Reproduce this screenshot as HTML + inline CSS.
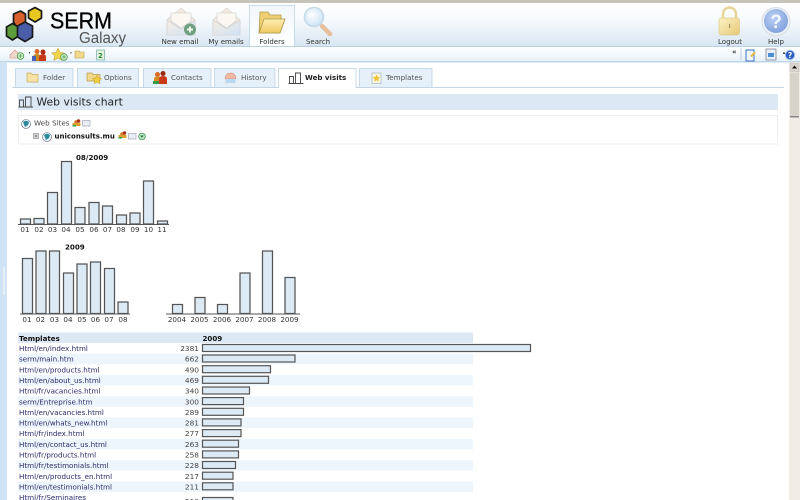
<!DOCTYPE html>
<html><head><meta charset="utf-8"><title>Web visits chart</title>
<style>
html,body{margin:0;padding:0;width:800px;height:500px;overflow:hidden;background:#fff}
svg{display:block;filter:blur(.3px)}
text{font-family:"DejaVu Sans",sans-serif;font-size:7.1px;fill:#333}
.nav{text-anchor:middle;font-size:7px;fill:#333}
.tab{font-size:7.2px;fill:#555}
.l{fill:#2a2a6a;font-size:7.15px}
.n{text-anchor:end;font-size:7.4px;fill:#444}
.c{text-anchor:middle;font-size:7.2px;fill:#333}
.b{font-weight:bold;fill:#111;font-size:7.1px}
.bar{fill:#dceaf6;stroke:#555;stroke-width:1.25}
.hb{fill:#dceaf6;stroke:#555;stroke-width:1.2}
.st{fill:#eef6fd}
</style></head>
<body>
<svg width="800" height="500" viewBox="0 0 800 500" xmlns="http://www.w3.org/2000/svg">
<defs>
<linearGradient id="hd" x1="0" y1="0" x2="0" y2="1"><stop offset="0" stop-color="#fff"/><stop offset=".35" stop-color="#f8fbfd"/><stop offset="1" stop-color="#d9e6f2"/></linearGradient>
<linearGradient id="tb" x1="0" y1="0" x2="0" y2="1"><stop offset="0" stop-color="#fff"/><stop offset="1" stop-color="#e8f1f9"/></linearGradient>
<linearGradient id="act" x1="0" y1="0" x2="0" y2="1"><stop offset="0" stop-color="#f3f8fc"/><stop offset="1" stop-color="#fff"/></linearGradient>
<linearGradient id="env" x1="0" y1="0" x2="1" y2="1"><stop offset="0" stop-color="#f7eee2"/><stop offset="1" stop-color="#cfe2f5"/></linearGradient>
<linearGradient id="fol" x1="0" y1="0" x2="0" y2="1"><stop offset="0" stop-color="#fdf0b5"/><stop offset="1" stop-color="#f0c860"/></linearGradient>
<linearGradient id="lock" x1="0" y1="0" x2="1" y2="1"><stop offset="0" stop-color="#fdf3c4"/><stop offset="1" stop-color="#e6c878"/></linearGradient>
<radialGradient id="hlp" cx=".4" cy=".35" r=".7"><stop offset="0" stop-color="#bcd0f2"/><stop offset="1" stop-color="#7f9fdc"/></radialGradient>
<radialGradient id="lens" cx=".4" cy=".4" r=".7"><stop offset="0" stop-color="#fff"/><stop offset="1" stop-color="#c5e0f2"/></radialGradient>
</defs>

<!-- top strip & header -->
<rect width="800" height="3" fill="#c6c3bb"/>
<rect y="3" width="800" height="43" fill="url(#hd)"/>
<rect y="46" width="800" height="1" fill="#b9d0e4"/>
<rect y="47" width="800" height="14" fill="url(#tb)"/>
<rect y="61" width="800" height="1.5" fill="#bcd5ea"/>
<rect y="62" width="7" height="438" fill="#d0e3f4"/>
<rect x="3" y="267" width="2" height="28" fill="#e8f1f9" opacity=".8"/>

<!-- logo -->
<g stroke="#1a1a1a" stroke-width="1.700" stroke-linejoin="round">
<path d="M20.500 11l5 3v8l-3 5h-6l-3-5v-8z" fill="#d9602c"/>
<path d="M35 7.500l6.500 3.500v7l-6.500 4-6.500-4v-7z" fill="#e8c81e"/>
<path d="M12.500 23.500l6 3.500v9l-6 4-6-4v-9z" fill="#5d9c3a"/>
<path d="M25 22l7.500 4v11l-7.500 4.500-7.500-4.500v-11z" fill="#4a5ea8"/>
</g>
<text x="50" y="28.500" style="font-family:'Liberation Sans',sans-serif;font-size:23.500px;fill:#000;stroke:#000;stroke-width:.3" textLength="62" lengthAdjust="spacingAndGlyphs">SERM</text>
<text x="79" y="43" style="font-family:'Liberation Sans',sans-serif;font-size:15.500px;fill:#555" textLength="47" lengthAdjust="spacingAndGlyphs">Galaxy</text>

<!-- active nav -->
<path d="M249.500 46V5.500h45V46" fill="url(#act)" stroke="#c9dcec"/>

<!-- New email -->
<g stroke="#d6d6d6" stroke-width=".8">
<path d="M167 20l14-12 14 12v15h-28z" fill="#f5e9dc"/>
<path d="M171 21V13h20v8l-10 7z" fill="#fbf8f2"/>
<path d="M167 20l14 9 14-9v15h-28z" fill="url(#env)"/>
</g>
<circle cx="190" cy="29.500" r="6" fill="#6f9f80"/>
<path d="M190 26.500v6M187 29.500h6" stroke="#e8f5e8" stroke-width="2"/>
<!-- My emails -->
<g stroke="#d6d6d6" stroke-width=".8">
<path d="M213 20l13.500-12 13.500 12v15h-27z" fill="#f5e9dc"/>
<path d="M217 21V13h19v8l-9.500 7z" fill="#fbf8f2"/>
<path d="M213 20l13.500 9 13.500-9v15h-27z" fill="url(#env)"/>
</g>
<!-- Folder -->
<path d="M259 33l1-21h8l2 3h11v4h4l-5 14z" fill="#f0cf72" stroke="#b09a50" stroke-width=".8"/>
<path d="M259 33l5-14h21l-5 14z" fill="url(#fol)" stroke="#b09a50" stroke-width=".8"/>
<!-- Search -->
<path d="M322 26l8 8" stroke="#e8bf9c" stroke-width="4.500" stroke-linecap="round"/>
<circle cx="314" cy="17" r="9.500" fill="url(#lens)" stroke="#c6d9e6" stroke-width="1.600"/>

<text class="nav" x="180" y="44">New email</text>
<text class="nav" x="226" y="44">My emails</text>
<text class="nav" x="272" y="44">Folders</text>
<text class="nav" x="318" y="44">Search</text>

<!-- Logout -->
<path d="M723 19v-5a6.500 6.500 0 0 1 13 0v5" fill="none" stroke="#e8d698" stroke-width="2.500"/>
<rect x="719" y="18" width="20.500" height="17" rx="2.500" fill="url(#lock)" stroke="#dcc98c" stroke-width=".7"/>
<rect x="729" y="24" width="1.200" height="4" fill="#a89560"/>
<text class="nav" x="730" y="44">Logout</text>
<!-- Help -->
<circle cx="776" cy="21.500" r="14" fill="#eef2f8" stroke="#d5dde8"/>
<circle cx="776" cy="21" r="12" fill="url(#hlp)"/>
<text x="776" y="28" style="font-family:'Liberation Sans',sans-serif;font-size:19px;font-weight:bold;fill:#f4f7fc;text-anchor:middle">?</text>
<text class="nav" x="776" y="44">Help</text>

<!-- toolbar icons left -->
<path d="M10 55l5-5 5 5v3h-10z" fill="#f0d8c8" stroke="#c88" stroke-width=".6"/>
<circle cx="20.500" cy="56" r="3.300" fill="#d8f0d0" stroke="#4a9a4a" stroke-width=".8"/>
<path d="M20.500 54v4M18.500 56h4" stroke="#4a9a4a" stroke-width=".7"/>
<rect x="29" y="52" width="1" height="1.500" fill="#444"/>
<circle cx="37" cy="51.500" r="2.500" fill="#d96a28"/><circle cx="43" cy="52" r="2.500" fill="#b02a10"/>
<path d="M33 61v-4q0-3 4-3t3 3v4z" fill="#c88a20"/><path d="M39 61v-4q1-3 4-3t3 3v4z" fill="#c83a18"/><rect x="32" y="56" width="4" height="5" fill="#4a62b8"/>
<path d="M58 48l2 4.500 4.500.5-3.300 3 1 4.500-4.200-2.400-4.200 2.400 1-4.500-3.300-3 4.500-.5z" fill="#f2d448" stroke="#b8962a" stroke-width=".5"/>
<circle cx="64" cy="57" r="3.300" fill="#d8f0d0" stroke="#4a9a4a" stroke-width=".8"/>
<path d="M64 55v4M62 57h4" stroke="#4a9a4a" stroke-width=".7"/>
<rect x="70.500" y="52" width="1" height="1.500" fill="#444"/>
<path d="M75 58v-7h4l1 1h4v6z" fill="#f2d88a" stroke="#b89a50" stroke-width=".6"/>
<rect x="96.500" y="50" width="8" height="10" fill="#e4f2e0" stroke="#7aa" stroke-width=".7"/>
<text x="98" y="58" style="font-size:7px;font-weight:bold;fill:#2a8a3a">2</text>

<!-- toolbar right -->
<text x="732" y="54" style="font-size:7px;font-weight:bold;fill:#333">«</text>
<rect x="740.500" y="48" width="1" height="12" fill="#bcd0e2"/>
<rect x="746" y="50" width="8" height="11" fill="#eef5fb" stroke="#3a70b8"/>
<path d="M750 56l4-4 2 1-4 4z" fill="#e8b838"/>
<rect x="766" y="49" width="10" height="11" fill="#e8eef4" stroke="#778" stroke-width=".7"/>
<rect x="768" y="53" width="6" height="4" fill="#4a90d0"/>
<rect x="783" y="52.500" width="2" height="1.500" fill="#444"/>
<circle cx="790" cy="55" r="4.700" fill="#2a5ec0" stroke="#a8c4e8"/>
<text x="790" y="58" style="font-size:7.500px;font-weight:bold;fill:#fff;text-anchor:middle">?</text>

<!-- scrollbar -->
<rect x="789" y="62" width="11" height="438" fill="#f0ede6"/>
<rect x="790" y="63" width="9" height="9" fill="#d8d5cd" stroke="#bbb" stroke-width=".5"/>
<path d="M794.500 65.500l2.500 3h-5z" fill="#111"/>
<rect x="790" y="73" width="9" height="44" fill="#d6d3ca"/>
<rect x="790" y="116" width="9" height="1.500" fill="#888"/>

<!-- tabs -->
<rect x="12" y="87" width="772" height="1" fill="#c3d4e2"/>
<g fill="#e6f0f8" stroke="#bcd2e4" stroke-width=".8">
<path d="M15.500 87V68.500h57.500V87"/>
<path d="M77.500 87V68.500h61V87"/>
<path d="M143.500 87V68.500h67.500V87"/>
<path d="M214.500 87V68.500h60.500V87"/>
<path d="M359.500 87V68.500h72.500V87"/>
</g>
<path d="M278.500 88V68.500h77.500V88" fill="#fff" stroke="#bcd2e4" stroke-width=".8"/>

<text class="tab" x="43" y="80">Folder</text>
<text class="tab" x="104" y="80">Options</text>
<text class="tab" x="171" y="80">Contacts</text>
<text class="tab" x="241" y="80">History</text>
<text x="305" y="80" style="font-weight:bold;fill:#222;font-size:7.100px">Web visits</text>
<text class="tab" x="386" y="80">Templates</text>

<!-- tab icons -->
<path d="M27 82v-9h4l1.500 1.500H38V82z" fill="#f6e2a4" stroke="#c8ac60" stroke-width=".7"/>
<path d="M87 81v-8h5l1 1.500h7V81z" fill="#f2d88a" stroke="#b89a50" stroke-width=".7"/>
<path d="M97 75l1.500 3 3.200.4-2.300 2.200.6 3.200-3-1.600-3 1.600.6-3.200-2.300-2.200 3.200-.4z" fill="#f0cc3c" stroke="#b89a2a" stroke-width=".4"/>
<circle cx="157.500" cy="74.500" r="2.500" fill="#d96a28"/><circle cx="163" cy="73.500" r="2.500" fill="#9a2810"/>
<path d="M154 84v-5q0-2.500 3.500-2.500t3.500 2.500v5z" fill="#d88a20"/><path d="M159 84v-5q0-3 4-3t4 3v5z" fill="#c83a18"/><rect x="153" y="81" width="6" height="3" fill="#3a9a48"/>
<path d="M225 79q0-6 5.500-6t5.500 6z" fill="#f0b8a0" stroke="#c88" stroke-width=".5"/><rect x="225.500" y="79" width="10" height="4" fill="#b8d8f2"/>
<path d="M288.500 83.500h15M289.500 83v-6.500h4V83M295.500 83V73h5v10" fill="none" stroke="#444" stroke-width=".9"/>
<rect x="372" y="73" width="9" height="10.500" fill="#f8f4e0" stroke="#9ab" stroke-width=".6"/>
<path d="M376.500 74.500l1.200 2.400 2.500.3-1.800 1.700.5 2.500-2.400-1.300-2.400 1.300.5-2.500-1.800-1.700 2.500-.3z" fill="#eec238"/>

<!-- heading -->
<rect x="18" y="94" width="760" height="16" fill="#dce9f5"/>
<path d="M18.500 107h14.500M19.500 106.500v-6.500h4v6.500M25.500 106.500V97h5.500v9.500" fill="none" stroke="#444" stroke-width=".9"/>
<text x="36.500" y="105.500" style="font-size:10.800px;fill:#222">Web visits chart</text>

<!-- tree -->
<rect x="18.500" y="115.500" width="759" height="28.500" fill="#fff" stroke="#eeeeee"/>
<circle cx="26" cy="124" r="4.500" fill="#eaf2f8" stroke="#567" stroke-width=".6"/>
<path d="M23 122q3-2.500 6 0l-1 3-3 2z" fill="#2a8a9a"/>
<text x="34" y="125.500" style="fill:#444;font-size:7.200px">Web Sites</text>
<circle cx="76" cy="122" r="1.800" fill="#d97a28"/><circle cx="78.500" cy="121" r="1.800" fill="#a8301a"/>
<rect x="72.500" y="123" width="8" height="3" fill="#d9a030"/><rect x="72.500" y="125" width="3.500" height="1.500" fill="#3a9a48"/>
<rect x="82.500" y="120.500" width="7.500" height="5.500" fill="#e8eef6" stroke="#99a" stroke-width=".6"/>
<rect x="33.500" y="133.500" width="5" height="5" fill="#ddd" stroke="#888" stroke-width=".6"/>
<path d="M34.500 136h3M36 134.500v3" stroke="#444" stroke-width=".5"/>
<circle cx="47" cy="137" r="4.500" fill="#eaf2f8" stroke="#567" stroke-width=".6"/>
<path d="M44 135q3-2.500 6 0l-1 3-3 2z" fill="#2a8a9a"/>
<text x="54.500" y="138.500" style="font-weight:bold;fill:#111;font-size:7px">uniconsults.mu</text>
<circle cx="122" cy="134" r="1.800" fill="#d97a28"/><circle cx="124.500" cy="133" r="1.800" fill="#a8301a"/>
<rect x="118.500" y="135" width="8" height="3" fill="#d9a030"/><rect x="118.500" y="137" width="3.500" height="1.500" fill="#3a9a48"/>
<rect x="128.500" y="133.500" width="7.500" height="5.500" fill="#e8eef6" stroke="#99a" stroke-width=".6"/>
<circle cx="142" cy="136.500" r="3.300" fill="#bfe6c4" stroke="#2a8a4a" stroke-width=".7"/>
<path d="M140.300 135.500h3.400l-1.700 2.300z" fill="#1a6a3a"/>

<!-- chart 1 -->
<text class="b" x="76" y="160">08/2009</text>
<g class="bars">
<rect class="bar" x="20.500" y="219" width="10" height="5"/>
<rect class="bar" x="34" y="218.500" width="10" height="5.500"/>
<rect class="bar" x="47.500" y="192.500" width="10" height="31.500"/>
<rect class="bar" x="61.500" y="161.500" width="10" height="62.500"/>
<rect class="bar" x="75" y="207.500" width="10" height="16.500"/>
<rect class="bar" x="89" y="202.500" width="10" height="21.500"/>
<rect class="bar" x="102.500" y="206" width="10" height="18"/>
<rect class="bar" x="116.500" y="215" width="10" height="9"/>
<rect class="bar" x="130" y="213" width="10" height="11"/>
<rect class="bar" x="143.500" y="181" width="10" height="43"/>
<rect class="bar" x="157.500" y="221" width="10" height="3"/>
</g>
<rect x="18" y="224" width="151" height="1" fill="#555"/>
<g>
<text class="c" x="25" y="232">01</text><text class="c" x="39" y="232">02</text><text class="c" x="52.500" y="232">03</text><text class="c" x="66" y="232">04</text><text class="c" x="80" y="232">05</text><text class="c" x="94" y="232">06</text><text class="c" x="107.500" y="232">07</text><text class="c" x="121" y="232">08</text><text class="c" x="135" y="232">09</text><text class="c" x="148.500" y="232">10</text><text class="c" x="162" y="232">11</text>
</g>

<!-- chart 2 -->
<text class="b" x="65" y="249.500">2009</text>
<rect class="bar" x="22.500" y="258.500" width="10" height="55"/>
<rect class="bar" x="36" y="251" width="10" height="62.500"/>
<rect class="bar" x="49.500" y="251" width="10" height="62.500"/>
<rect class="bar" x="63.500" y="273" width="10" height="40.500"/>
<rect class="bar" x="77" y="264" width="10" height="49.500"/>
<rect class="bar" x="90.500" y="262" width="10" height="51.500"/>
<rect class="bar" x="104.500" y="268.500" width="10" height="45"/>
<rect class="bar" x="118" y="302" width="10" height="11.500"/>
<rect x="20" y="313.500" width="110" height="1" fill="#555"/>
<text class="c" x="27" y="322">01</text><text class="c" x="40.500" y="322">02</text><text class="c" x="54.500" y="322">03</text><text class="c" x="68" y="322">04</text><text class="c" x="82" y="322">05</text><text class="c" x="95.500" y="322">06</text><text class="c" x="109" y="322">07</text><text class="c" x="123" y="322">08</text>

<!-- chart 3 -->
<rect class="bar" x="172.500" y="304.500" width="10" height="9"/>
<rect class="bar" x="195" y="297.500" width="10" height="16"/>
<rect class="bar" x="217.500" y="304.500" width="10" height="9"/>
<rect class="bar" x="240" y="273" width="10" height="40.500"/>
<rect class="bar" x="262.500" y="251" width="10" height="62.500"/>
<rect class="bar" x="285" y="277.500" width="10" height="36"/>
<rect x="166" y="313.500" width="134" height="1" fill="#555"/>
<text class="c" x="177" y="322">2004</text><text class="c" x="199.500" y="322">2005</text><text class="c" x="222" y="322">2006</text><text class="c" x="244.500" y="322">2007</text><text class="c" x="267" y="322">2008</text><text class="c" x="289.500" y="322">2009</text>

<!-- table -->
<rect x="18" y="332.500" width="455" height="10.500" fill="#dce9f4"/>
<rect class="st" x="18" y="353.700" width="455" height="10.600"/>
<rect class="st" x="18" y="375" width="455" height="10.600"/>
<rect class="st" x="18" y="396.300" width="455" height="10.600"/>
<rect class="st" x="18" y="417.600" width="455" height="10.600"/>
<rect class="st" x="18" y="438.900" width="455" height="10.600"/>
<rect class="st" x="18" y="460.200" width="455" height="10.600"/>
<rect class="st" x="18" y="481.500" width="455" height="10.600"/>

<text class="b" x="19" y="341">Templates</text>
<text class="b" x="202.500" y="341">2009</text>

<text class="l" x="19" y="351">Html/en/index.html</text><text class="n" x="199" y="351">2381</text>
<text class="l" x="19" y="361.700">serm/main.htm</text><text class="n" x="199" y="361.700">662</text>
<text class="l" x="19" y="372.300">Html/en/products.html</text><text class="n" x="199" y="372.300">490</text>
<text class="l" x="19" y="383">Html/en/about_us.html</text><text class="n" x="199" y="383">469</text>
<text class="l" x="19" y="393.600">Html/fr/vacancies.html</text><text class="n" x="199" y="393.600">340</text>
<text class="l" x="19" y="404.300">serm/Entreprise.htm</text><text class="n" x="199" y="404.300">300</text>
<text class="l" x="19" y="414.900">Html/en/vacancies.html</text><text class="n" x="199" y="414.900">289</text>
<text class="l" x="19" y="425.600">Html/en/whats_new.html</text><text class="n" x="199" y="425.600">281</text>
<text class="l" x="19" y="436.200">Html/fr/index.html</text><text class="n" x="199" y="436.200">277</text>
<text class="l" x="19" y="446.900">Html/en/contact_us.html</text><text class="n" x="199" y="446.900">263</text>
<text class="l" x="19" y="457.500">Html/fr/products.html</text><text class="n" x="199" y="457.500">258</text>
<text class="l" x="19" y="468.200">Html/fr/testimonials.html</text><text class="n" x="199" y="468.200">228</text>
<text class="l" x="19" y="478.800">Html/en/products_en.html</text><text class="n" x="199" y="478.800">217</text>
<text class="l" x="19" y="489.500">Html/en/testimonials.html</text><text class="n" x="199" y="489.500">211</text>
<text class="l" x="19" y="500">Html/fr/Seminaires</text><text class="n" x="199" y="504">210</text>

<rect class="hb" x="202.500" y="344.500" width="328" height="7"/>
<rect class="hb" x="202.500" y="355" width="92.500" height="7"/>
<rect class="hb" x="202.500" y="365.700" width="68" height="7"/>
<rect class="hb" x="202.500" y="376.300" width="66" height="7"/>
<rect class="hb" x="202.500" y="387" width="47" height="7"/>
<rect class="hb" x="202.500" y="397.600" width="41" height="7"/>
<rect class="hb" x="202.500" y="408.300" width="41" height="7"/>
<rect class="hb" x="202.500" y="418.900" width="38.500" height="7"/>
<rect class="hb" x="202.500" y="429.600" width="38.500" height="7"/>
<rect class="hb" x="202.500" y="440.200" width="36" height="7"/>
<rect class="hb" x="202.500" y="450.900" width="36" height="7"/>
<rect class="hb" x="202.500" y="461.500" width="33" height="7"/>
<rect class="hb" x="202.500" y="472.200" width="30.500" height="7"/>
<rect class="hb" x="202.500" y="482.800" width="30.500" height="7"/>
<rect class="hb" x="202.500" y="497.500" width="30.500" height="7"/>
</svg>
</body></html>
